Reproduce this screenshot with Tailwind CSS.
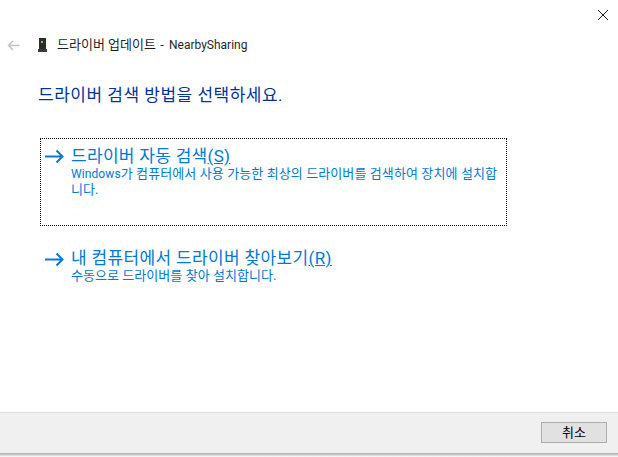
<!DOCTYPE html>
<html lang="ko">
  <head>
    <meta charset="UTF-8" />
    <meta name="viewport" content="width=device-width, initial-scale=1.0" />
    <title>드라이버 업데이트</title>
    <script src="https://cdn.jsdelivr.net/npm/@tailwindcss/browser@4"></script>
  </head>
  <body class="w-[618px] h-[457px] overflow-hidden bg-white font-['Roboto','Noto_Sans_CJK_KR',sans-serif]">
    <div class="flex flex-col h-[457px]">
      <!-- title bar -->
      <div class="flex justify-end h-[30px] pt-[10px] pr-[10px]">
        <svg width="10" height="10" viewBox="0 0 10 10" fill="none" stroke="#1a1a1a" stroke-width="1"><path d="M0 0L10 10M10 0L0 10" /></svg>
      </div>

      <!-- header -->
      <div class="flex items-center h-[30px] pl-[7px]">
        <svg width="13" height="11" viewBox="0 0 13 11" fill="none" stroke="#c4c4c4" stroke-width="1.5"><path d="M12.5 5.5H1.5M6 1L1.5 5.5L6 10" /></svg>
        <svg class="ml-[18px]" width="9" height="14" viewBox="0 0 9 14"><rect x="1" y="0" width="7" height="11" fill="#2b2b2b" /><rect x="3" y="3" width="2" height="2" fill="#4fe04f" /><rect x="0" y="11" width="9" height="3" fill="#3a3a3a" /></svg>
        <span class="ml-[10px] text-[13px] leading-[16px] text-[#1f1f1f]">드라이버 업데이트 <span class="ml-[1px]">-</span> <span class="ml-[2px] text-[12px]">NearbySharing</span></span>
      </div>

      <h1 class="mt-[23px] ml-[38px] text-[17px] leading-[24px] tracking-[0.5px] text-[#003399] font-normal">드라이버 검색 방법을 선택하세요.</h1>

      <!-- options -->
      <div class="ml-[40px] mt-[31px] w-[467px] h-[88px] border border-dotted border-black flex pl-[4px] pt-[7px]">
        <svg class="mt-[3px] shrink-0" width="19" height="15" viewBox="0 0 19 15" fill="none" stroke="#0a78d7" stroke-width="2"><path d="M0 7.5H17M11.5 1.5L17.5 7.5L11.5 13.5" /></svg>
        <div class="ml-[7px] w-[432px]">
          <div class="text-[17px] leading-[20px] tracking-[0.3px] text-[#0078d7]">드라이버 자동 검색<span class="underline">(S)</span></div>
          <p class="text-[13px] leading-[16px] tracking-[0.1px] text-[#0078d7]"><span class="text-[12px]">Windows</span>가 컴퓨터에서 사용 가능한 최상의 드라이버를 검색하여 장치에 설치합니다.</p>
        </div>
      </div>

      <div class="ml-[45px] mt-[22px] flex">
        <svg class="mt-[4px] shrink-0" width="19" height="15" viewBox="0 0 19 15" fill="none" stroke="#0a78d7" stroke-width="2"><path d="M0 7.5H17M11.5 1.5L17.5 7.5L11.5 13.5" /></svg>
        <div class="ml-[7px]">
          <div class="text-[17px] leading-[20px] tracking-[0.35px] text-[#0078d7]">내 컴퓨터에서 드라이버 찾아보기<span class="underline">(R)</span></div>
          <p class="text-[13px] leading-[16px] tracking-[0.05px] text-[#0078d7]">수동으로 드라이버를 찾아 설치합니다.</p>
        </div>
      </div>

      <!-- footer -->
      <div class="mt-auto h-[41px] bg-[#f0f0f0] border-t border-[#dfdfdf] flex justify-end items-start pt-[9px] pr-[11px]">
        <button class="w-[66px] h-[21px] bg-[#e1e1e1] border border-[#adadad] text-[13px] leading-[18px] text-black">취소</button>
      </div>
      <div class="h-[4px] bg-gradient-to-b from-[#a9a9a9] to-white"></div>
    </div>
  </body>
</html>
